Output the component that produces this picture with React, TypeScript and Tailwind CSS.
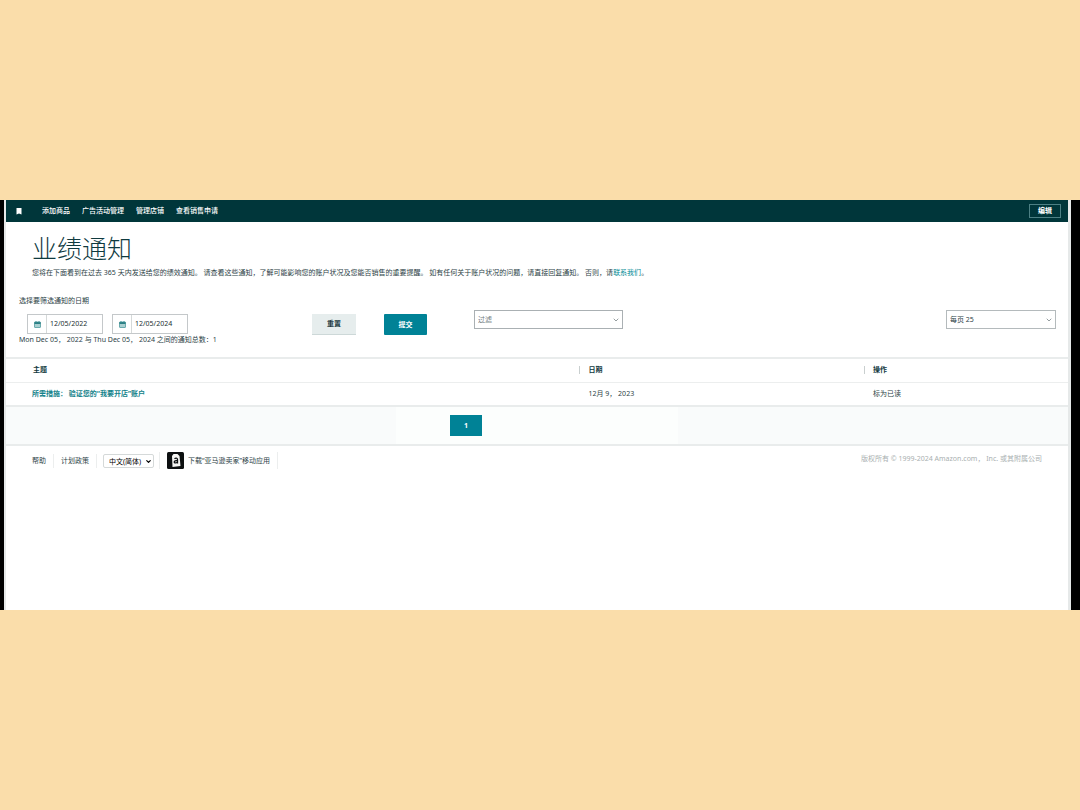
import { ChevronDown } from "lucide-react";

const navLinks = ["添加商品", "广告活动管理", "管理店铺", "查看销售申请"];

const notifications = [
  {
    subject: "所需措施： 验证您的“我要开店”账户",
    date: "12月 9， 2023",
    action: "标为已读",
  },
];

function BookmarkIcon() {
  return (
    <svg viewBox="0 0 12 14" className="h-[7px] w-[6px]" fill="currentColor" aria-hidden="true">
      <path d="M1 0h10v13l-5-2-5 2z" />
    </svg>
  );
}

function CalendarIcon() {
  return (
    <svg viewBox="0 0 14 14" className="size-[7px]" aria-hidden="true">
      <rect x="1" y="2" width="12" height="11" rx="1" fill="#a9cfd0" stroke="#4f9a9e" strokeWidth="1.6" />
      <rect x="1" y="2" width="12" height="4" fill="#2b7f84" />
      <path d="M4 0v3M10 0v3" stroke="#4f9a9e" strokeWidth="2" />
    </svg>
  );
}

function SellerAppIcon() {
  return (
    <svg viewBox="0 0 34 34" className="size-[17px]" aria-hidden="true">
      <rect width="34" height="34" rx="3" fill="#0d1011" />
      <path d="M10 8l3-4h8l4 4 2 20-16 2z" fill="#f6f6f4" />
      <path
        d="M15 13.500c2-2 6-2 6 1.500v8M21 17.500c-4-.5-6.500.5-6.500 2.700s4 2.600 6.500-.6"
        fill="none"
        stroke="#0d1011"
        strokeWidth="2.600"
      />
    </svg>
  );
}

function DateField({ label, value }: { label: string; value: string }) {
  return (
    <label className="flex h-5 w-[76px] border border-[#c4c8ca] bg-white">
      <span className="flex w-[19px] shrink-0 items-center justify-center border-r border-[#d5d9d9]">
        <CalendarIcon />
      </span>
      <input
        type="text"
        aria-label={label}
        defaultValue={value}
        className="w-full min-w-0 px-[3px] text-[#1b2f33] outline-none"
      />
    </label>
  );
}

export default function App() {
  return (
    <div
      lang="zh-CN"
      className="flex min-h-screen flex-col justify-center bg-[#faddaa] font-['Noto_Sans','Noto_Sans_CJK_SC',sans-serif] text-[7px] leading-[14px] text-[#2c4246]"
    >
      <div className="bg-black pr-[9px] pl-1">
        <div className="border-r-[3px] border-l-2 border-[#e6e9e9] bg-white pb-[141px]">
          <header className="flex h-[22px] items-center bg-[#00363a] pr-[7px] pl-[10px] text-white">
            <BookmarkIcon />
            <nav className="ml-5 flex gap-3 font-medium">
              {navLinks.map((link) => (
                <a key={link} href="#">
                  {link}
                </a>
              ))}
            </nav>
            <button
              type="button"
              className="ml-auto flex h-[14px] w-8 items-center justify-center border border-[#4d8084] font-bold"
            >
              编辑
            </button>
          </header>

          <main>
            <section className="px-[26px] pt-[10px]">
              <h1 className="mb-px text-[25px] leading-[33px] font-light text-[#0f3a3f]">业绩通知</h1>
              <p>
                您将在下面看到在过去 365 天内发送给您的绩效通知。 请查看这些通知，了解可能影响您的账户状况及您能否销售的重要提醒。
                如有任何关于账户状况的问题，请直接回复通知。 否则，请
                <a href="#" className="text-[#008a94]">
                  联系我们
                </a>
                。
              </p>
            </section>

            <section className="mt-[14px] pr-3 pl-[13px]">
              <h2>选择要筛选通知的日期</h2>
              <form className="flex items-start pl-2">
                <div className="mt-[6px] flex gap-[9px]">
                  <DateField label="开始日期" value="12/05/2022" />
                  <DateField label="结束日期" value="12/05/2024" />
                </div>
                <div className="mt-[6px] ml-[124px] flex gap-7 font-bold">
                  <button
                    type="button"
                    className="h-[21px] w-11 border-b border-[#cdd8d8] bg-[#e6eded] text-[#1b3a3e]"
                  >
                    重置
                  </button>
                  <button type="submit" className="h-[21px] w-[43px] rounded-[1px] bg-[#008296] text-white">
                    提交
                  </button>
                </div>
                <div className="relative mt-[2px] ml-[47px] w-[149px]">
                  <select
                    aria-label="过滤"
                    className="block h-[19px] w-full appearance-none border border-[#aab0b3] bg-white px-[3px] text-[#6f7c7f]"
                  >
                    <option>过滤</option>
                  </select>
                  <ChevronDown className="pointer-events-none absolute top-[6px] right-[3px] size-2 text-[#5f6b6e]" />
                </div>
                <div className="relative mt-[2px] ml-auto w-[110px]">
                  <select
                    aria-label="每页数量"
                    className="block h-[19px] w-full appearance-none border border-[#b4babc] bg-white px-[3px] text-[#2c4246]"
                  >
                    <option>每页 25</option>
                  </select>
                  <ChevronDown className="pointer-events-none absolute top-[6px] right-[3px] size-2 text-[#5f6b6e]" />
                </div>
              </form>
              <p className="leading-[10px]">Mon Dec 05， 2022 与 Thu Dec 05， 2024 之间的通知总数：1</p>
            </section>

            <table className="mt-3 w-full table-fixed border-collapse border-t-2 border-b-2 border-[#e9ecec] text-left">
              <thead>
                <tr className="h-6 border-b border-[#eceeee] text-[#12393e]">
                  <th className="w-[54%] pl-[27px] font-bold">主题</th>
                  <th className="font-bold">
                    <span className="block border-l border-[#c9cfcf] pl-2 leading-2">日期</span>
                  </th>
                  <th className="w-[204px] font-bold">
                    <span className="block border-l border-[#c9cfcf] pl-2 leading-2">操作</span>
                  </th>
                </tr>
              </thead>
              <tbody>
                {notifications.map((item) => (
                  <tr key={item.subject} className="h-6">
                    <td className="pl-[26px]">
                      <a href="#" className="font-bold text-[#12828a]">
                        {item.subject}
                      </a>
                    </td>
                    <td className="pl-[9px]">{item.date}</td>
                    <td className="pl-[9px]">
                      <button type="button">{item.action}</button>
                    </td>
                  </tr>
                ))}
              </tbody>
            </table>

            <div className="border-b-2 border-[#e9ecec] bg-[#f9fbfb]">
              <div className="mx-auto flex h-[37px] w-[282px] items-center bg-[#fcfefd] pl-[54px]">
                <button type="button" className="h-[21px] w-8 bg-[#008296] font-bold text-white">
                  1
                </button>
              </div>
            </div>
          </main>

          <footer className="flex items-start justify-between px-[26px] pt-[6px]">
            <div className="flex h-[17px] items-center">
              <a href="#" className="border-r border-[#eceeee] pr-[7px]">
                帮助
              </a>
              <a href="#" className="border-r border-[#eceeee] px-[7px]">
                计划政策
              </a>
              <div className="relative ml-[6px] w-[51px]">
                <select
                  aria-label="语言"
                  className="block h-[14px] w-full appearance-none rounded-[2px] border border-[#d5d9d9] bg-white pl-[5px] text-black"
                >
                  <option>中文(简体)</option>
                </select>
                <ChevronDown
                  strokeWidth={4}
                  className="pointer-events-none absolute top-[4px] right-[2px] size-[7px] text-black"
                />
              </div>
              <a href="#" className="ml-[5px] flex items-center gap-1 border-x border-[#eceeee] px-[7px]">
                <SellerAppIcon />
                下载“亚马逊卖家”移动应用
              </a>
            </div>
            <p className="text-[#a9afb0]">版权所有 © 1999-2024 Amazon.com， Inc. 或其附属公司</p>
          </footer>
        </div>
      </div>
    </div>
  );
}
